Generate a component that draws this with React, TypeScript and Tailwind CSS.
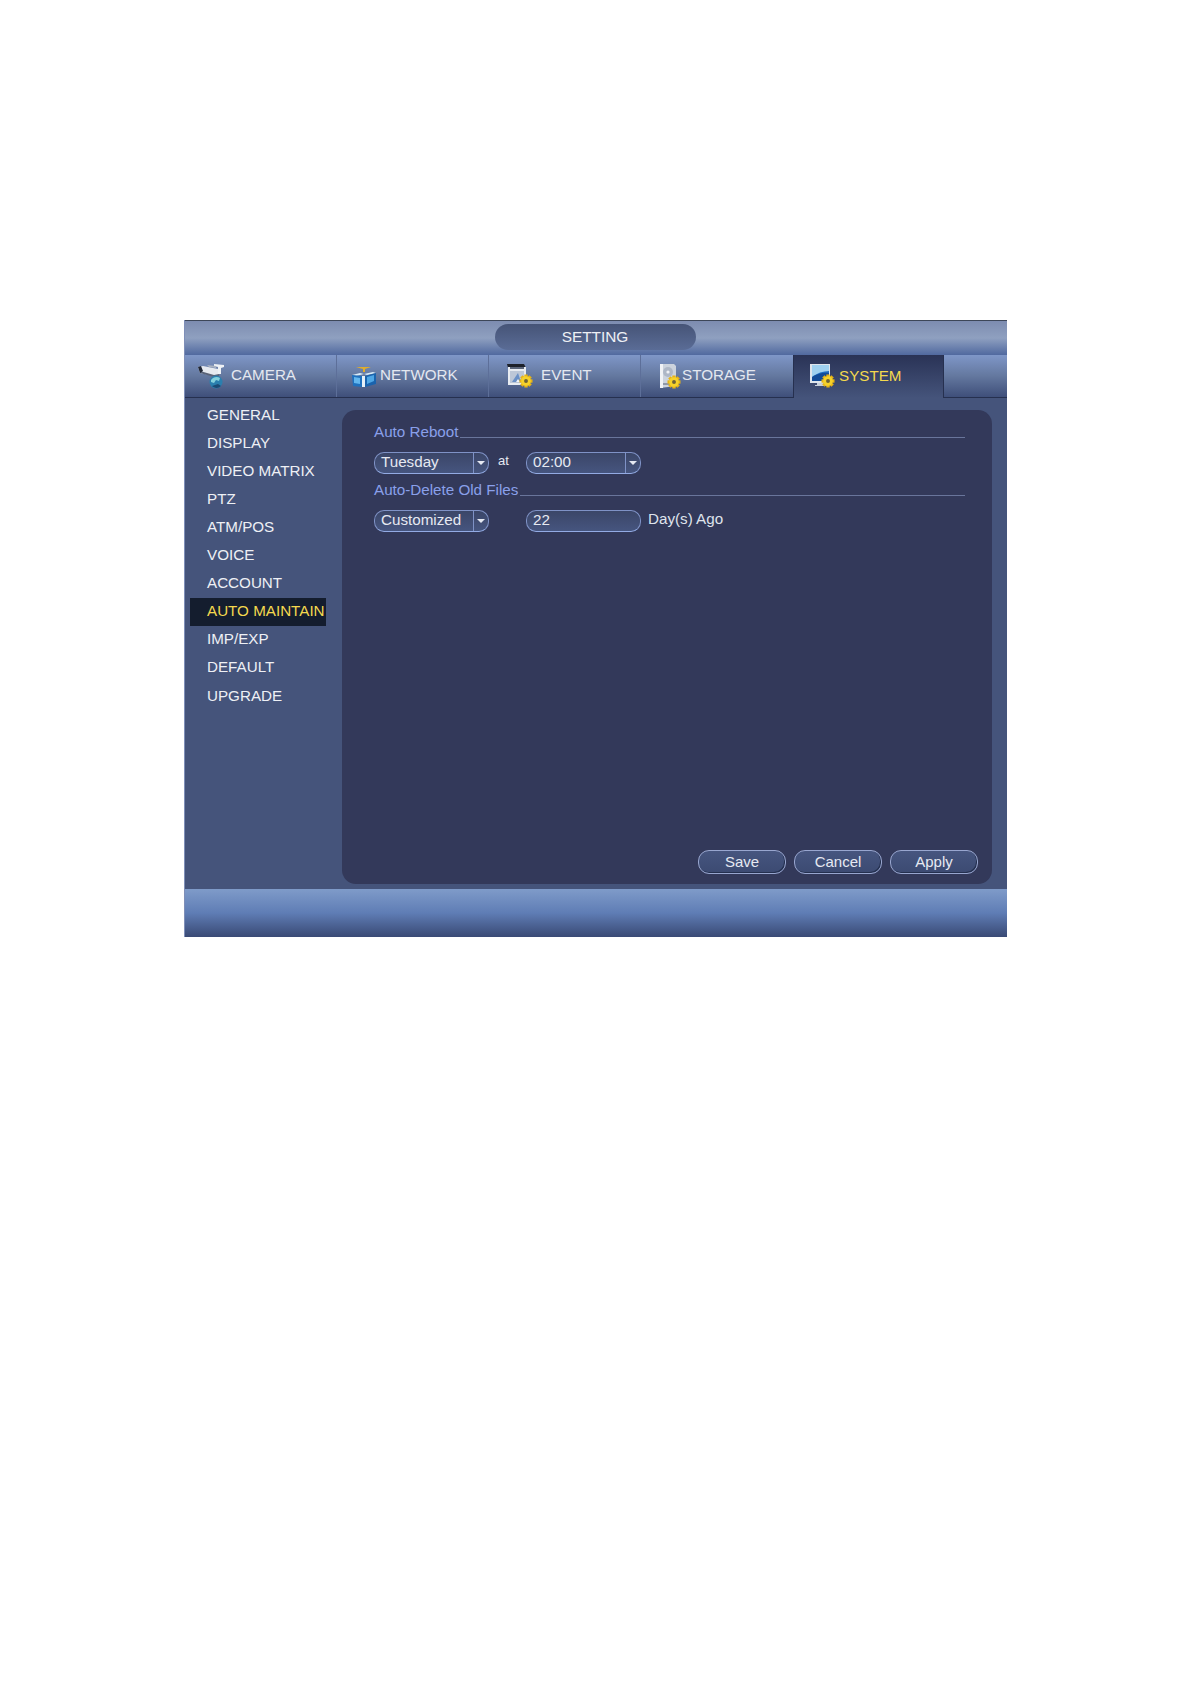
const font = "font-['Liberation_Sans',Arial,sans-serif]";

function Gear({ x, y, r = 6 }: { x: number; y: number; r?: number }) {
  const teeth = [0, 45, 90, 135];
  return (
    <g>
      {teeth.map((a) => (
        <rect key={a} x={x - r * 0.26} y={y - r} width={r * 0.52} height={r * 2} fill="#e8b414" transform={`rotate(${a} ${x} ${y})`} />
      ))}
      <circle cx={x} cy={y} r={r * 0.74} fill="#f6d22a" />
      <circle cx={x} cy={y} r={r * 0.3} fill="#6d6237" />
    </g>
  );
}

function CameraIcon() {
  return (
    <svg width="30" height="28" viewBox="0 0 30 28" className="shrink-0">
      <path d="M1 5l5-1 15 3 1 6-5 1L3 11z" fill="#e6e9ef" />
      <path d="M3 9l14 4 5-1v2l-5 1L3 11z" fill="#596277" />
      <path d="M1 5l3-1 2 5-3 2z" fill="#222836" />
      <path d="M17 2l10 1v2l-3 1v6h-3V5l-4-1z" fill="#eef1f5" />
      <path d="M10 3l9 1v2l-7-1z" fill="#aab3c2" />
      <circle cx="19" cy="20" r="6.5" fill="#2a7fae" />
      <path d="M14 18c2-3 6-4 9-2l-1 3-3-1-2 3-3-1z" fill="#84d0dc" />
      <path d="M15 24c2 2 6 3 9 0l-3-2-3 1z" fill="#1b4a74" />
    </svg>
  );
}

function NetworkIcon() {
  return (
    <svg width="26" height="24" viewBox="0 0 26 24" className="shrink-0">
      <path d="M5 3h15l-6 2v3h-2V5z" fill="#e0ad2a" />
      <path d="M1 11l8-2 4 1-8 2z" fill="#d8ecf8" />
      <path d="M13 10l9-2 3 1-9 2z" fill="#d8ecf8" />
      <path d="M1 11l10 1v11l-9-1z" fill="#1f70bd" />
      <path d="M3 13l6 1v6l-6-1z" fill="#62b6ee" />
      <path d="M14 12l11-3v11l-11 3z" fill="#1a63ad" />
      <path d="M16 13l7-2v6l-7 3z" fill="#4fa6e4" />
      <path d="M11 12l3 0v11h-3z" fill="#e6f0f7" />
    </svg>
  );
}

function EventIcon() {
  return (
    <svg width="28" height="25" viewBox="0 0 28 25" className="shrink-0">
      <path d="M1 1h17l2 4H2z" fill="#1c2029" />
      <rect x="2" y="4" width="18" height="18" fill="#e8ecf1" />
      <rect x="4" y="4" width="14" height="2" fill="#5a6478" />
      <path d="M4 8h14v12H4z" fill="#bcc7d7" />
      <path d="M6 19l6-9 3 9z" fill="#6a90c6" />
      <path d="M10 19l2-3 2 3z" fill="#f3f5f8" />
      <Gear x={20} y={18} r={6.5} />
    </svg>
  );
}

function StorageIcon() {
  return (
    <svg width="24" height="26" viewBox="0 0 24 26" className="shrink-0">
      <path d="M2 1h14l2 2v20l-16 2z" fill="#ccd3dd" />
      <path d="M2 1h3v24H2z" fill="#f0f2f5" />
      <circle cx="10" cy="9" r="5" fill="#aeb7c6" />
      <circle cx="10" cy="9" r="1.6" fill="#eef0f4" />
      <path d="M5 20h8v2H5z" fill="#8f98a8" />
      <Gear x={16} y={19} r={6.5} />
    </svg>
  );
}

function SystemIcon() {
  return (
    <svg width="26" height="26" viewBox="0 0 26 26" className="shrink-0">
      <rect x="1" y="1" width="20" height="19" fill="#dfe5ec" />
      <rect x="3" y="2" width="17" height="16" fill="#1f6fc4" />
      <path d="M3 2h17v6C14 8 8 10 3 14z" fill="#9fd1f0" />
      <path d="M3 14c5-3 11-5 17-4v8H3z" fill="#124c99" />
      <path d="M8 20h7v2h3v1H6v-1h2z" fill="#c9d0da" />
      <Gear x={19} y={18} r={6.5} />
    </svg>
  );
}

const tabs = [
  { label: "CAMERA", icon: <CameraIcon />, pad: "pl-[12px] gap-[4px]" },
  { label: "NETWORK", icon: <NetworkIcon />, pad: "pl-[14px] gap-[3px]" },
  { label: "EVENT", icon: <EventIcon />, pad: "pl-[17px] gap-[7px]" },
  { label: "STORAGE", icon: <StorageIcon />, pad: "pl-[17px] gap-0" },
  { label: "SYSTEM", icon: <SystemIcon />, pad: "pl-[15px] gap-[4px]", active: true },
];

const menu = ["GENERAL", "DISPLAY", "VIDEO MATRIX", "PTZ", "ATM/POS", "VOICE", "ACCOUNT", "AUTO MAINTAIN", "IMP/EXP", "DEFAULT", "UPGRADE"];

function Select({ value }: { value: string }) {
  return (
    <div className="flex h-[22px] w-[115px] items-stretch rounded-[10px] border border-[#7f92c6] border-b-[#93abe4] bg-gradient-to-b from-[#3b4668] to-[#46557f] text-[15.2px] text-[#e6e9f2]">
      <span className="flex-1 pl-[6px] leading-[18px]">{value}</span>
      <span className="flex w-[15px] items-center justify-center border-l border-[#7f92c6]">
        <span className="h-0 w-0 border-x-[4px] border-t-[4px] border-x-transparent border-t-[#e6e9f2]" />
      </span>
    </div>
  );
}

function SectionTitle({ children }: { children: string }) {
  return (
    <div className="flex h-[20px] items-end">
      <span className="text-[15.2px] leading-[20px] text-[#8aa0ea]">{children}</span>
      <span className="mb-[4px] ml-[2px] h-px flex-1 bg-[#69759b]" />
    </div>
  );
}

function ActionButton({ children }: { children: string }) {
  return (
    <button className="h-[24px] w-[88px] rounded-[11px] border border-[#98a6cf] bg-gradient-to-b from-[#46557f] to-[#3c4a72] text-[15px] leading-[20px] text-[#e6e9f2] shadow-[inset_-1px_-1px_0_#24304f]">
      {children}
    </button>
  );
}

export default function App() {
  return (
    <div className={`min-h-[1684px] bg-white pl-[184px] pt-[320px] ${font}`}>
      <div className="flex h-[617px] w-[823px] flex-col border-l border-[#7f8fb8] bg-[#45547b]">
        <div className="flex h-[35px] justify-center border-t border-[#3d4658] bg-gradient-to-b from-[#7d8cb0] via-[#8fa0c0] to-[#51699f] pr-[2px] pt-[3px]">
          <div className="flex h-[26px] w-[201px] items-center justify-center rounded-[13px] bg-gradient-to-b from-[#465477] to-[#5a6c96] text-[15.4px] text-[#eef0f5]">
            SETTING
          </div>
        </div>

        <div className="flex h-[43px] border-b border-[#26304f] bg-gradient-to-b from-[#7f97c8] via-[#64789f] to-[#3f4f7a]">
          {tabs.map((tab, i) =>
            tab.active ? (
              <div key={tab.label} className={`-mb-px flex w-[151px] items-center border-x border-[#26304f] bg-gradient-to-b from-[#2a3356] to-[#45547b] pb-[1px] text-[#f4d94e] ${tab.pad}`}>
                {tab.icon}
                <span className="text-[15.2px]">{tab.label}</span>
              </div>
            ) : (
              <div key={tab.label} className={`flex w-[152px] items-center pb-[1px] text-[#e4e8f0] ${tab.pad} ${i < 3 ? "border-r border-[#5d6f99]" : ""}`}>
                {tab.icon}
                <span className="text-[15.2px]">{tab.label}</span>
              </div>
            ),
          )}
        </div>

        <div className="flex flex-1 pb-[5px]">
          <div className="w-[157px] shrink-0 pl-[5px] pt-[3px]">
            <div className="w-[136px]">
              {menu.map((item) => (
                <div
                  key={item}
                  className={`flex h-[28.1px] items-center whitespace-nowrap pl-[17px] text-[15.2px] ${
                    item === "AUTO MAINTAIN" ? "bg-[#141d2e] text-[#f4d94e]" : "text-[#eef0f5]"
                  }`}
                >
                  {item}
                </div>
              ))}
            </div>
          </div>

          <div className="mr-[15px] mt-[12px] flex flex-1 flex-col rounded-[14px] bg-[#33395a] pb-[10px] pl-[32px] pr-[14px] pt-[12px]">
            <div className="pr-[13px]">
              <SectionTitle>Auto Reboot</SectionTitle>
              <div className="mt-[10px] flex items-center">
                <Select value="Tuesday" />
                <span className="-mt-[4px] ml-[9px] w-[28px] text-[13px] leading-[18px] text-[#e6e9f2]">at</span>
                <Select value="02:00" />
              </div>
              <div className="mt-[6px]">
                <SectionTitle>Auto-Delete Old Files</SectionTitle>
              </div>
              <div className="mt-[10px] flex items-center">
                <Select value="Customized" />
                <div className="ml-[37px] h-[22px] w-[115px] rounded-[10px] border border-[#7f92c6] border-b-[#93abe4] bg-gradient-to-b from-[#3b4668] to-[#46557f] pl-[6px] text-[15.2px] leading-[18px] text-[#e6e9f2]">
                  22
                </div>
                <span className="-mt-[4px] ml-[7px] text-[15.2px] leading-[18px] text-[#dfe3ec]">Day(s) Ago</span>
              </div>
            </div>
            <div className="mt-auto flex justify-end gap-[8px]">
              <ActionButton>Save</ActionButton>
              <ActionButton>Cancel</ActionButton>
              <ActionButton>Apply</ActionButton>
            </div>
          </div>
        </div>

        <div className="h-[48px] bg-gradient-to-b from-[#7f9bc9] via-[#5f7db5] to-[#3a4a75]" />
      </div>
    </div>
  );
}
